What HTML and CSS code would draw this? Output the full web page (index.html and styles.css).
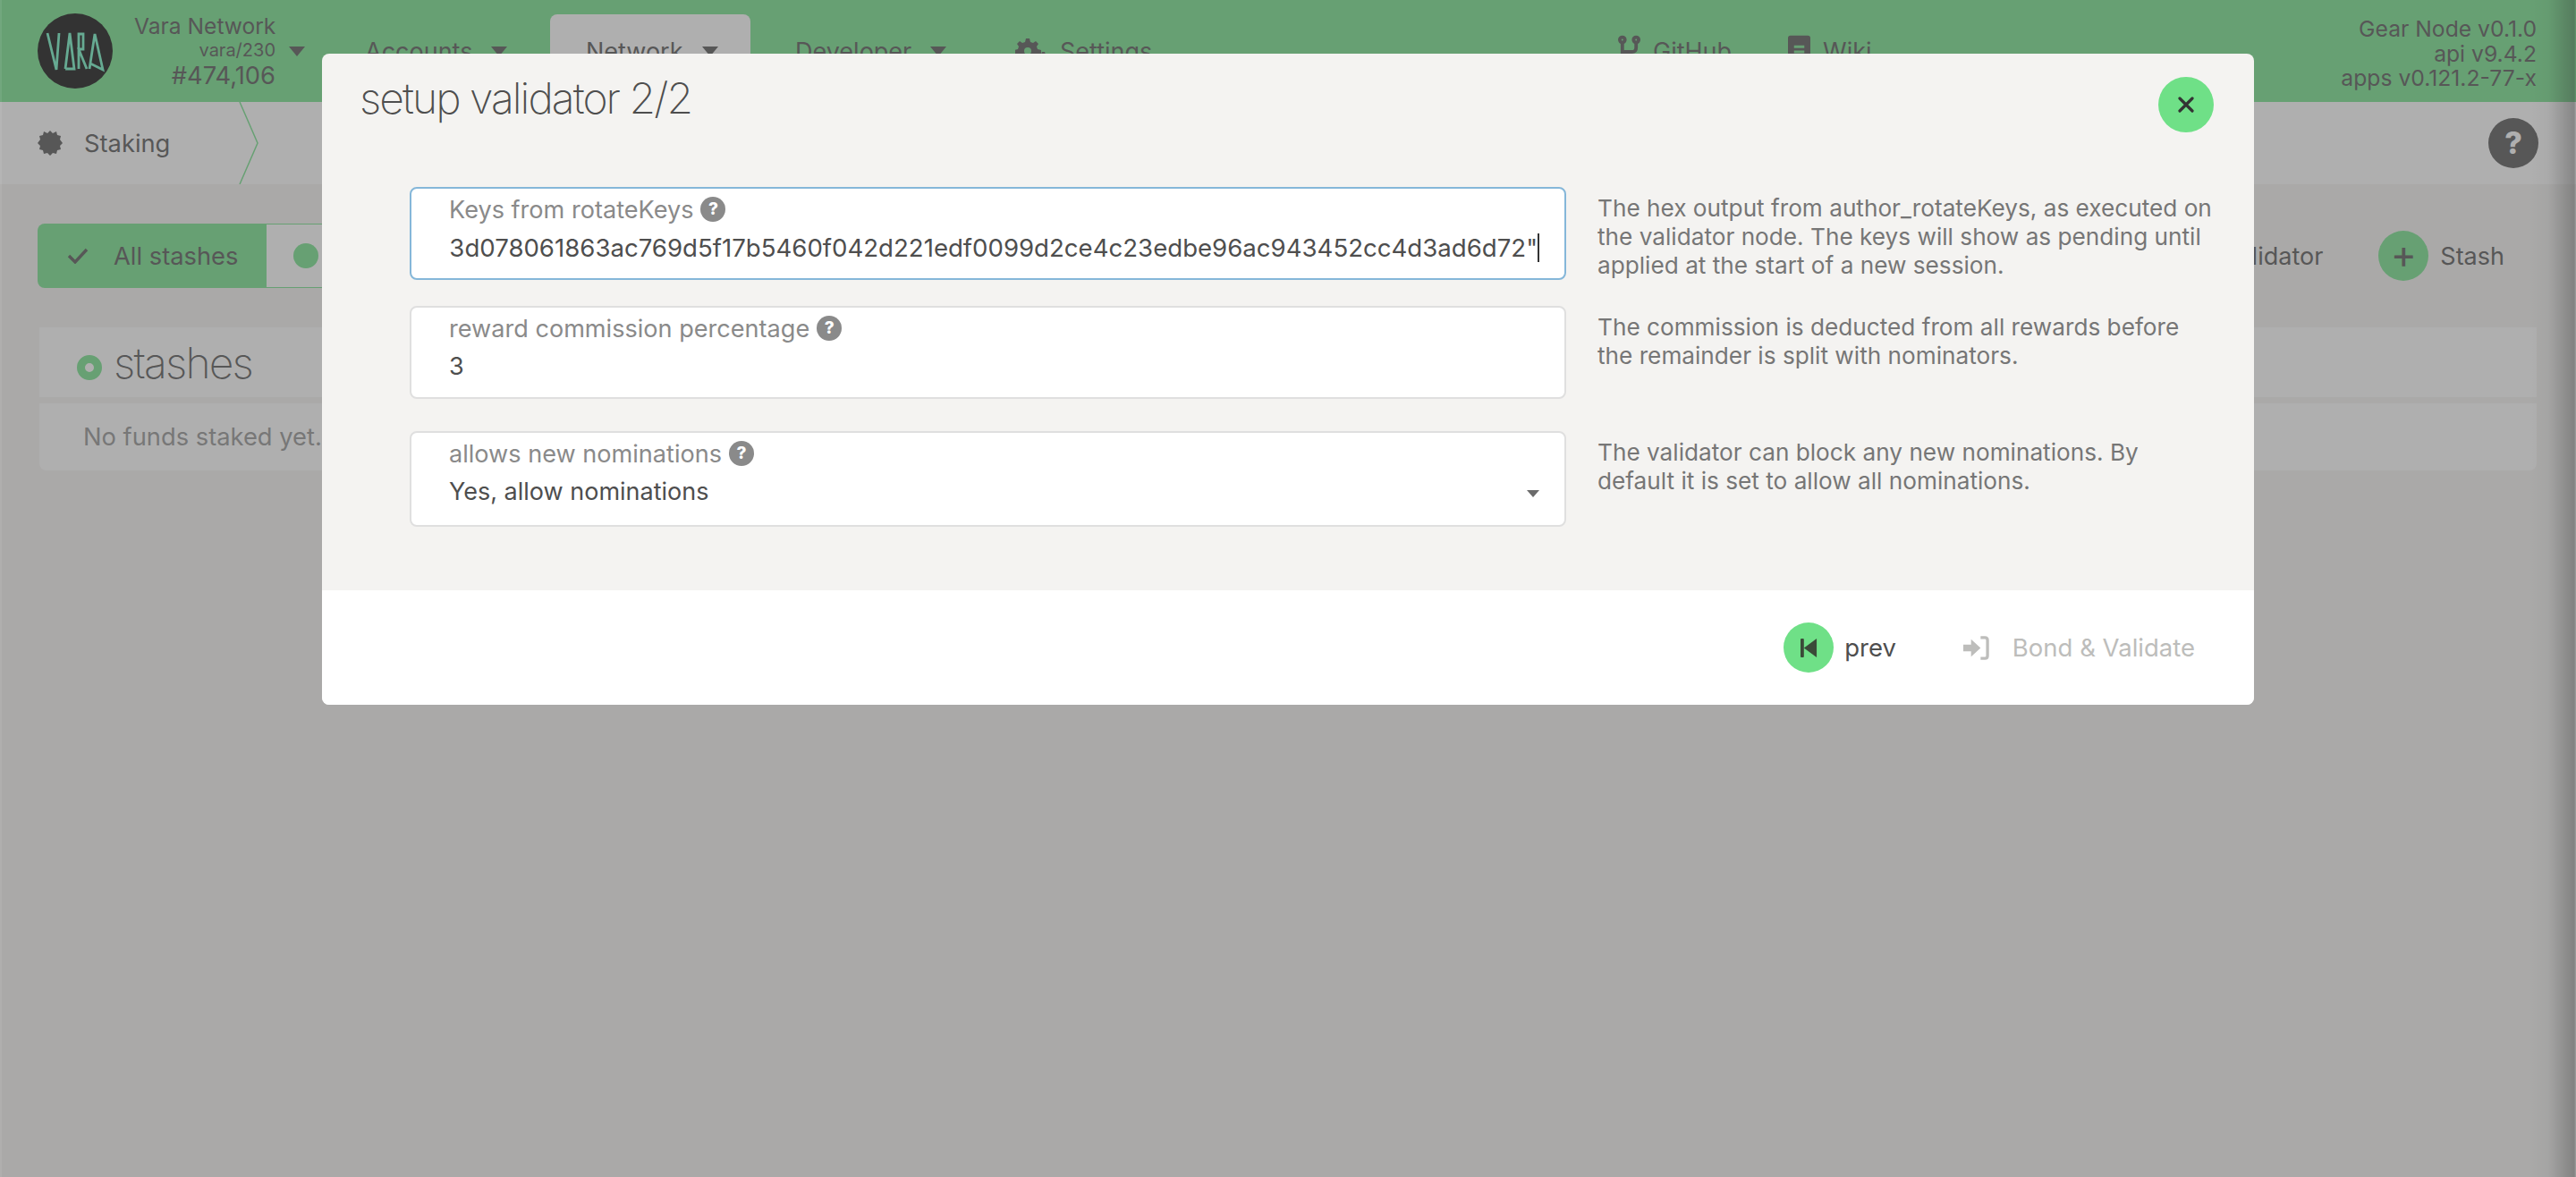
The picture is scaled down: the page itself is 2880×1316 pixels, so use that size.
FILE: index.html
```html
<!DOCTYPE html>
<html lang="en">
<head>
<meta charset="utf-8">
<title>Staking</title>
<link rel="stylesheet" href="styles.css">
</head>
<body>
<div class="app">
  <header class="topbar">
    <svg class="logo" viewBox="0 0 84 84">
      <circle cx="42" cy="42" r="42" fill="#060606"/>
      <g fill="none" stroke="#6cf5c5" stroke-width="2.8">
        <polyline points="11,22 21,63 24,22"/>
        <polyline points="31,62 36,22 41,62 31,62"/>
        <polyline points="46,62 46,23 51,23 51,40 46,40 55,62"/>
        <polyline points="58,62 64,23 73,63 59,56"/>
      </g>
    </svg>
    <div class="chain">
      <div>Vara Network</div>
      <div class="chain-version">vara/230</div>
      <div class="chain-block">#474,106</div>
    </div>
    <span class="caret caret-chain"></span>
    <nav class="menu">
      <div class="menu-item item-accounts">Accounts<span class="caret"></span></div>
      <div class="menu-item item-network">Network<span class="caret"></span></div>
      <div class="menu-item item-developer">Developer<span class="caret"></span></div>
      <div class="menu-item item-settings">
        <svg class="menu-icon" viewBox="0 0 38 30"><path fill="#4e4e4e" d="M12 1h4l1 4 3 1 3-2 3 3-2 3 1 3 4 1v4l-4 1-1 3 2 3-3 3-3-2-3 1-1 4h-4l-1-4-3-1-3 2-3-3 2-3-1-3-4-1v-4l4-1 1-3-2-3 3-3 3 2 3-1z"/><circle cx="14" cy="15" r="4" fill="#6fe087"/><path fill="#4e4e4e" d="M30 16h3l1 3 3 1v3l-3 1-1 3h-3l-1-3-3-1v-3l3-1z"/></svg>
        Settings
      </div>
    </nav>
    <nav class="links">
      <div class="link">
        <svg class="link-icon" viewBox="0 0 26 36"><g fill="none" stroke="#4e4e4e" stroke-width="4"><circle cx="5" cy="5" r="3"/><circle cx="21" cy="5" r="3"/><circle cx="5" cy="31" r="3"/><path d="M5 8v20M21 8v6q0 5-5 5H5"/></g></svg>
        GitHub
      </div>
      <div class="link">
        <svg class="link-icon" viewBox="0 0 26 36"><rect width="26" height="36" rx="3" fill="#4e4e4e"/><path d="M7 13h12M7 19h12" stroke="#6fe087" stroke-width="3"/></svg>
        Wiki
      </div>
    </nav>
    <div class="versions">
      <div>Gear Node v0.1.0</div>
      <div>api v9.4.2</div>
      <div>apps v0.121.2-77-x</div>
    </div>
  </header>

  <div class="subnav">
    <div class="subnav-tab">
      <svg class="burst" viewBox="0 0 28 28"><path fill="#4e4e4e" d="M14 0l3 3 4-2 1 4 4 1-1 4 3 4-3 3 1 4-4 1-1 4-4-1-3 3-3-3-4 1-1-4-4-1 1-4-3-3 3-4-1-4 4-1 1-4 4 2z"/></svg>
      <span>Staking</span>
    </div>
    <svg class="chevron" viewBox="0 0 22 92"><polyline points="1,0 21,46 1,92" fill="none" stroke="#6fe087" stroke-width="1.5"/></svg>
    <div class="help-round">?</div>
  </div>

  <main class="content">
    <div class="toolbar">
      <div class="tabs">
        <div class="tab tab-active">
          <svg class="check" viewBox="0 0 24 18"><polyline points="2,9 9,16 22,2" fill="none" stroke="#4e4e4e" stroke-width="3.4"/></svg>
          All stashes
        </div>
        <div class="tab tab-other"><span class="dot"></span>Nominators</div>
      </div>
      <div class="actions-bar">
        <div class="action"><span class="round-green">+</span>Validator</div>
        <div class="action"><span class="round-green">+</span>Stash</div>
      </div>
    </div>
    <section class="table">
      <div class="table-head"><span class="ring"></span><h2 class="table-title">stashes</h2></div>
      <div class="table-row">No funds staked yet.</div>
    </section>
  </main>
</div>

<div class="edge-shade"></div>

<div class="dimmer">
  <div class="modal">
    <div class="modal-head">
      <h1 class="modal-title">setup validator 2/2</h1>
      <button class="close" aria-label="close">
        <svg viewBox="0 0 18 18"><path d="M2 2l14 14M16 2L2 16" stroke="#333" stroke-width="3.2" stroke-linecap="round"/></svg>
      </button>
    </div>
    <div class="modal-body">
      <div class="form-row row-keys">
        <div class="field field-focus">
          <label class="field-label">Keys from rotateKeys <span class="qmark">?</span></label>
          <div class="field-scroll"><span class="field-value keys-value">"3d078061863ac769d5f17b5460f042d221edf0099d2ce4c23edbe96ac943452cc4d3ad6d72"</span></div>
        </div>
        <p class="hint">The hex output from author_rotateKeys, as executed on the validator node. The keys will show as pending until applied at the start of a new session.</p>
      </div>
      <div class="form-row row-commission">
        <div class="field">
          <label class="field-label">reward commission percentage <span class="qmark">?</span></label>
          <div class="field-value">3</div>
        </div>
        <p class="hint">The commission is deducted from all rewards before the remainder is split with nominators.</p>
      </div>
      <div class="form-row row-allow">
        <div class="field field-select">
          <label class="field-label">allows new nominations <span class="qmark">?</span></label>
          <div class="field-value">Yes, allow nominations</div>
          <span class="select-caret"></span>
        </div>
        <p class="hint">The validator can block any new nominations. By default it is set to allow all nominations.</p>
      </div>
    </div>
    <div class="modal-actions">
      <button class="btn">
        <span class="btn-icon"><svg viewBox="0 0 20 24"><rect x="0" y="1" width="4" height="22" rx="1" fill="#3a4a38"/><path d="M19 1v22L4 12z" fill="#3a4a38"/></svg></span>
        prev
      </button>
      <button class="btn btn-disabled">
        <svg class="signin" viewBox="0 0 30 30"><path fill="#bdbdbb" d="M0 11h9V5l11 10-11 10v-6H0z"/><path d="M20 3h5q3 0 3 3v18q0 3-3 3h-5" fill="none" stroke="#bdbdbb" stroke-width="3.4"/></svg>
        Bond &amp; Validate
      </button>
    </div>
  </div>
</div>
</body>
</html>
```

FILE: styles.css
```css
* { box-sizing: border-box; }
html, body { margin: 0; height: 100%; overflow: hidden; }
body {
  position: relative;
  width: 2880px;
  height: 1316px;
  background: #f4f3f1;
  color: #4e4e4e;
  font-family: Inter, "Liberation Sans", sans-serif;
  font-size: 27px;
}
.app { height: 100%; display: flex; flex-direction: column; }

/* top bar */
.topbar {
  height: 114px;
  flex: none;
  display: flex;
  align-items: flex-start;
  background: #6fe087;
  padding-left: 42px;
}
.logo { width: 84px; height: 84px; margin-top: 15px; flex: none; }
.chain {
  width: 158px;
  margin: 15px 0 0 24px;
  flex: none;
  text-align: right;
  font-size: 24.6px;
  line-height: 29px;
  white-space: nowrap;
}
.chain-version { font-size: 20px; line-height: 25px; }
.chain-block { font-size: 27.3px; line-height: 31px; }
.caret {
  display: inline-block;
  flex: none;
  width: 0;
  height: 0;
  border-left: 9px solid transparent;
  border-right: 9px solid transparent;
  border-top: 11px solid #4e4e4e;
  margin-left: 21px;
}
.caret-chain { margin: 52px 0 0 15px; }
.menu { display: flex; flex: none; margin: 16px 0 0 67px; height: 98px; }
.menu-item {
  display: flex;
  flex: none;
  align-items: center;
  height: 98px;
  padding-bottom: 16px;
  font-size: 27px;
  white-space: nowrap;
}
.item-accounts { width: 207px; }
.item-network { width: 224px; padding-left: 40px; background: #fff; border-radius: 8px 8px 0 0; margin-right: 50px; }
.item-developer { width: 246px; }
.item-settings { width: 155px; }
.menu-icon { width: 38px; height: 30px; margin-right: 12px; flex: none; }
.links { display: flex; flex: none; margin: 16px 0 0 519px; height: 82px; align-items: center; gap: 63px; }
.link { display: flex; align-items: center; gap: 14px; font-size: 27px; }
.link-icon { width: 25px; height: 36px; }
.versions {
  margin: 19px 44px 0 auto;
  text-align: right;
  font-size: 24.7px;
  line-height: 27.5px;
}

/* sub navigation */
.subnav {
  height: 92px;
  flex: none;
  display: flex;
  align-items: center;
  background: #fff;
  padding: 0 42px;
}
.subnav-tab { display: flex; align-items: center; gap: 24px; font-size: 27.3px; width: 225px; }
.burst { width: 28px; height: 28px; }
.chevron { width: 22px; height: 92px; }
.help-round {
  width: 56px;
  height: 56px;
  margin: 0 0 0 auto;
  border-radius: 50%;
  background: #4e4e4e;
  color: #fff;
  font-weight: 800;
  font-size: 34px;
  line-height: 56px;
  text-align: center;
}

/* page content */
.content { flex: 1; padding: 44px 44px 0 42px; }
.toolbar { display: flex; justify-content: space-between; align-items: center; height: 72px; }
.tabs { display: flex; }
.tab { display: flex; align-items: center; height: 72px; font-size: 27.3px; white-space: nowrap; }
.tab-active {
  width: 255px;
  background: #6fe087;
  border-radius: 8px 0 0 8px;
  padding-left: 33px;
  gap: 28px;
}
.check { width: 24px; height: 18px; }
.tab-other { background: #fff; border: 1px solid #6fe087; padding: 0 30px; gap: 16px; width: 300px; }
.dot { width: 28px; height: 28px; border-radius: 50%; background: #6fe087; }
.actions-bar { display: flex; gap: 62px; margin-right: 36px; }
.action { display: flex; align-items: center; gap: 13px; font-size: 27px; }
.round-green {
  width: 56px;
  height: 56px;
  border-radius: 50%;
  background: #6fe087;
  font-size: 44px;
  line-height: 52px;
  font-weight: 400;
  text-align: center;
}
.table { margin: 44px 0 0 2px; }
.table-head {
  height: 78px;
  display: flex;
  align-items: center;
  background: #fff;
  padding-left: 42px;
  gap: 13px;
}
.ring { width: 28px; height: 28px; border-radius: 50%; border: 9px solid #6fe087; background: #fff; margin-top: 12px; }
.table-title { margin: 0; font-size: 48px; letter-spacing: -1.8px; font-weight: 200; color: #4e4e4e; }
.table-row {
  margin-top: 7px;
  height: 75px;
  display: flex;
  align-items: center;
  background: #fff;
  border-radius: 0 0 8px 8px;
  padding-left: 49px;
  color: #8f8f8f;
  font-size: 27.3px;
}

/* dim layers */
.dimmer {
  position: absolute;
  inset: 0;
  background: rgba(96, 96, 96, 0.5);
  box-shadow: inset 2px 0 0 rgba(255, 255, 255, 0.08);
  display: flex;
  justify-content: center;
  align-items: flex-start;
  padding-top: 60px;
}
.edge-shade {
  position: absolute;
  top: 0;
  bottom: 0;
  right: 0;
  width: 52px;
  background: linear-gradient(to right, rgba(0,0,0,0), rgba(0,0,0,0.04) 40%, rgba(0,0,0,0.32) 96%, rgba(0,0,0,0.08));
}

/* modal */
.modal {
  width: 2160px;
  height: 728px;
  display: flex;
  flex-direction: column;
  background: #f4f3f1;
  border-radius: 8px;
  overflow: hidden;
}
.modal-head {
  height: 149px;
  flex: none;
  display: flex;
  justify-content: space-between;
  align-items: flex-start;
  padding: 22px 45px 0 42px;
}
.modal-title { margin: 0; font-size: 48px; letter-spacing: -1.95px; line-height: 56px; font-weight: 200; color: #4e4e4e; }
.close {
  width: 62px;
  height: 62px;
  margin-top: 4px;
  border: 0;
  padding: 0;
  border-radius: 50%;
  background: #6fe087;
  display: flex;
  align-items: center;
  justify-content: center;
}
.close svg { width: 18px; height: 18px; }
.modal-body { flex: 1; padding-left: 98px; }
.form-row { display: flex; align-items: flex-start; }
.row-commission { margin-top: 29px; }
.row-allow { margin-top: 36px; }
.field {
  position: relative;
  width: 1293px;
  height: 104px;
  flex: none;
  padding: 8px 0 0 42px;
  background: #fff;
  border: 2px solid #dfdfdf;
  border-radius: 8px;
}
.field-focus { border-color: #85b7d9; }
.field-select { height: 107px; }
.field-label {
  display: flex;
  align-items: center;
  height: 30px;
  gap: 8px;
  font-size: 27.1px;
  color: #8a8a8a;
  white-space: nowrap;
}
.qmark {
  width: 28px;
  height: 28px;
  border-radius: 50%;
  background: #8a8a8a;
  color: #fff;
  font-size: 19px;
  font-weight: 800;
  line-height: 28px;
  text-align: center;
}
.field-value { margin-top: 12px; font-size: 27px; line-height: 32px; color: #4e4e4e; white-space: nowrap; }
.field-scroll { width: 1219px; overflow: hidden; display: flex; justify-content: flex-end; }
.keys-value { flex: none; font-size: 27.6px; border-right: 2px solid #333; height: 32px; }
.select-caret {
  position: absolute;
  right: 28px;
  top: 64px;
  border-left: 7px solid transparent;
  border-right: 7px solid transparent;
  border-top: 8px solid #6b6b6b;
}
.hint {
  margin: 8px 0 0 35px;
  width: 688px;
  font-size: 26.2px;
  line-height: 32px;
  color: #767676;
}
.modal-actions {
  height: 128px;
  flex: none;
  display: flex;
  justify-content: flex-end;
  align-items: center;
  gap: 75px;
  padding-right: 66px;
  background: #fff;
}
.btn {
  display: flex;
  align-items: center;
  gap: 12px;
  padding: 0;
  border: 0;
  background: none;
  font-family: inherit;
  font-size: 27.5px;
  color: #4e4e4e;
}
.btn-icon {
  width: 56px;
  height: 56px;
  border-radius: 50%;
  background: #6fe087;
  display: flex;
  align-items: center;
  justify-content: center;
}
.btn-icon svg { width: 19px; height: 23px; }
.btn-disabled { color: #bdbdbb; gap: 26px; }
.signin { width: 29px; height: 29px; }
```
